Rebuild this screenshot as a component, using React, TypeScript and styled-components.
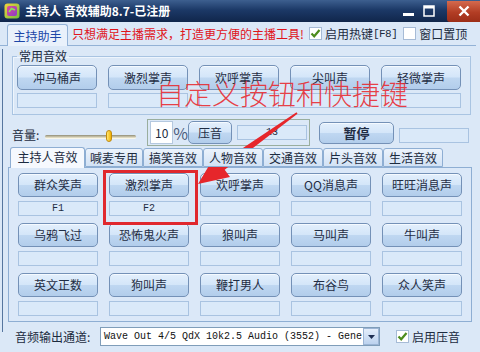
import React from "react";
import styled, { createGlobalStyle } from "styled-components";

const CJK = `"Noto Sans CJK SC", "Noto Sans", sans-serif`;
const MONO = `"Liberation Mono", "DejaVu Sans Mono", monospace`;

const GlobalStyle = createGlobalStyle`
  html, body {
    margin: 0;
    padding: 0;
    background: #dbe8f7;
  }
  body {
    font-family: ${CJK};
    font-size: 12px;
  }
  * {
    box-sizing: border-box;
  }
`;

const Window = styled.div`
  position: relative;
  width: 480px;
  height: 352px;
  overflow: hidden;
  background: #dbe8f7;
  color: #1c2b40;
`;

/* ---------- title bar ---------- */

const TitleBar = styled.div`
  display: flex;
  align-items: center;
  height: 22px;
  background: linear-gradient(#3d5f8f, #1c3967 45%, #10264b);
  color: #fff;
`;

const AppIcon = styled.svg`
  margin: 0 5px 0 4px;
  flex: none;
`;

const Title = styled.div`
  flex: 1;
  font-size: 12px;
  font-weight: bold;
  line-height: 22px;
  white-space: nowrap;
`;

const CaptionButton = styled.div<{ $close?: boolean }>`
  display: flex;
  align-items: center;
  justify-content: center;
  width: ${(p) => (p.$close ? 33 : 20)}px;
  height: 21px;
  margin-left: ${(p) => (p.$close ? 8 : 0)}px;
  background: ${(p) =>
    p.$close ? "linear-gradient(#d46a4e, #b23d24 55%, #9c2e18)" : "transparent"};
  border-radius: ${(p) => (p.$close ? "0 0 0 3px" : "0")};
`;

/* ---------- header row ---------- */

const HeaderRow = styled.div`
  display: flex;
  align-items: flex-end;
  height: 24px;
  padding-left: 7px;
  border-bottom: 1px solid #93b2d6;
  margin-right: 4px;
`;

const HeaderTab = styled.div`
  width: 61px;
  height: 22px;
  border: 1px solid #94b3d8;
  border-bottom: none;
  border-radius: 3px 3px 0 0;
  background: #e9f1fb;
  color: #1b46a8;
  font-size: 12px;
  line-height: 21px;
  text-align: center;
  margin-bottom: -1px;
`;

const Slogan = styled.div`
  align-self: center;
  margin-left: 4px;
  color: #e0141b;
  font-size: 12px;
  white-space: nowrap;
`;

const CheckRow = styled.label<{ $gap: number }>`
  display: flex;
  align-items: center;
  align-self: center;
  margin-left: ${(p) => p.$gap}px;
  font-size: 12px;
  white-space: nowrap;
`;

const Box = styled.span`
  display: flex;
  align-items: center;
  justify-content: center;
  width: 13px;
  height: 13px;
  margin-right: 3px;
  background: #fff;
  border: 1px solid #a6bbd6;
`;

const Mono = styled.span`
  font-family: ${MONO};
  font-size: 11px;
  letter-spacing: -0.5px;
`;

/* ---------- page ---------- */

const Page = styled.div`
  border-left: 1px solid #56769f;
  margin-left: 2px;
  height: 283px;
`;

const Group = styled.fieldset`
  width: 459px;
  margin: 3px 0 0 9px;
  padding: 2px 4px 6px 4px;
  border: 1px solid #a9c4e2;
  box-shadow: inset 1px 1px 0 #eef5fd;
`;

const Legend = styled.legend`
  padding: 0 2px;
  font-size: 12px;
  line-height: 14px;
  color: #1c2b40;
`;

const ButtonGrid = styled.div<{ $rowGap: number }>`
  display: grid;
  grid-template-columns: repeat(5, 80px);
  column-gap: 11px;
  row-gap: ${(p) => p.$rowGap}px;
`;

const Cell = styled.div<{ $gap: number }>`
  display: flex;
  flex-direction: column;
  gap: ${(p) => p.$gap}px;
`;

const SoundButton = styled.div<{ $h: number }>`
  width: 80px;
  height: ${(p) => p.$h}px;
  border: 1px solid #7491b7;
  border-radius: 5px;
  background: linear-gradient(#e3effc 0%, #d4e6f9 48%, #bfd7f1 52%, #b2cdeb 100%);
  box-shadow: inset 0 1px 0 #f5faff;
  font-size: 12px;
  color: #1f2d44;
  line-height: ${(p) => p.$h - 2}px;
  text-align: center;
  white-space: nowrap;
`;

const KeyBox = styled.div`
  width: 80px;
  height: 15px;
  border: 1px solid #a9c3e1;
  background: #dae9f9;
  font-family: ${MONO};
  font-size: 10px;
  line-height: 13px;
  text-align: center;
  color: #1f2d44;
`;

/* ---------- volume row ---------- */

const VolumeRow = styled.div`
  display: flex;
  align-items: flex-start;
  height: 32px;
  padding-left: 9px;
`;

const VolLabel = styled.div`
  width: 33px;
  margin-top: 13px;
  font-size: 12px;
  line-height: 14px;
`;

const Slider = styled.div`
  position: relative;
  display: flex;
  align-items: center;
  width: 91px;
  height: 12px;
  margin-top: 15px;
`;

const Track = styled.div`
  width: 100%;
  height: 3px;
  border-radius: 2px;
  background: linear-gradient(#8f8c76, #efe9cf);
  box-shadow: 0 1px 0 #f8f6ea;
`;

const Thumb = styled.div`
  position: absolute;
  top: 0;
  width: 6px;
  height: 12px;
  border-radius: 3px;
  border: 1px solid #c08a10;
  background: linear-gradient(90deg, #ffe774, #f0b000);
`;

const VolumeBox = styled.div`
  display: flex;
  align-items: center;
  width: 163px;
  height: 27px;
  margin: 4px 0 0 11px;
  padding: 0 2px;
  border: 1px solid #9aae9e;
`;

const NumBox = styled.div`
  width: 23px;
  height: 23px;
  background: #fff;
  border: 1px solid #b4c8df;
  font-size: 12px;
  line-height: 21px;
  padding-left: 4px;
`;

const Percent = styled.div`
  width: 15px;
  font-size: 16px;
  color: #4b5c7c;
  text-align: center;
`;

const SmallButton = styled.div<{ $w: number; $h: number; $bold?: boolean }>`
  width: ${(p) => p.$w}px;
  height: ${(p) => p.$h}px;
  border: 1px solid #7491b7;
  border-radius: 5px;
  background: linear-gradient(#e3effc 0%, #d4e6f9 48%, #bfd7f1 52%, #b2cdeb 100%);
  box-shadow: inset 0 1px 0 #f5faff;
  font-size: ${(p) => (p.$bold ? 13 : 12)}px;
  font-weight: ${(p) => (p.$bold ? "bold" : "normal")};
  line-height: ${(p) => p.$h - 2}px;
  text-align: center;
  color: #1f2d44;
`;

const ValueField = styled.div<{ $ml: number; $mt: number }>`
  width: 70px;
  height: 15px;
  margin: ${(p) => p.$mt}px 0 0 ${(p) => p.$ml}px;
  border: 1px solid #a9c3e1;
  background: #dae9f9;
  font-family: ${MONO};
  font-size: 10px;
  line-height: 13px;
  text-align: center;
`;

const PauseWrap = styled.div`
  margin: 7px 0 0 9px;
`;

/* ---------- tabs ---------- */

const TabBar = styled.div`
  position: relative;
  z-index: 1;
  display: flex;
  align-items: flex-end;
  height: 20px;
  padding-left: 7px;
`;

const Tab = styled.div<{ $w: number; $active?: boolean }>`
  width: ${(p) => p.$w}px;
  height: ${(p) => (p.$active ? 21 : 19)}px;
  margin-bottom: ${(p) => (p.$active ? -1 : 0)}px;
  border: 1px solid #8eaed3;
  border-bottom: ${(p) => (p.$active ? "none" : "1px solid #8eaed3")};
  border-radius: 3px 3px 0 0;
  background: ${(p) => (p.$active ? "#f6f9fe" : "linear-gradient(#ecf3fc, #d2e2f5)")};
  font-size: 12px;
  line-height: 18px;
  text-align: center;
  white-space: nowrap;
`;

const Panel = styled.div`
  width: 464px;
  height: 155px;
  margin-left: 5px;
  padding: 5px 0 0 9px;
  border: 1px solid #8eaed3;
  background: #dbe8f8;
`;

/* ---------- bottom row ---------- */

const BottomRow = styled.div`
  display: flex;
  align-items: center;
  height: 29px;
  padding-left: 12px;
`;

const OutLabel = styled.div`
  width: 85px;
  font-size: 12px;
  white-space: nowrap;
`;

const Select = styled.div`
  display: flex;
  align-items: center;
  width: 280px;
  height: 19px;
  background: #fff;
  border: 1px solid #7f9db9;
`;

const SelectText = styled.div`
  flex: 1;
  padding-left: 3px;
  font-family: ${MONO};
  font-size: 10px;
  white-space: nowrap;
  color: #111;
`;

const DropButton = styled.div`
  display: flex;
  align-items: center;
  justify-content: center;
  width: 16px;
  height: 17px;
  border: 1px solid #9bb4d4;
  background: linear-gradient(#e4eefb, #bcd2ee);
`;

/* ---------- annotation overlay ---------- */

const Caption = styled.div`
  position: absolute;
  left: 156px;
  top: 77px;
  font-size: 28px;
  font-weight: 300;
  line-height: 32px;
  color: rgba(232, 40, 46, 0.88);
  white-space: nowrap;
  pointer-events: none;
`;

const RedFrame = styled.div`
  position: absolute;
  left: 103px;
  top: 170px;
  width: 95px;
  height: 55px;
  border: 3px solid #e0282e;
`;

const ArrowLayer = styled.svg`
  position: absolute;
  left: 0;
  top: 0;
  pointer-events: none;
`;

type Sound = { name: string; key?: string };

const common: Sound[] = [
  { name: "冲马桶声" },
  { name: "激烈掌声" },
  { name: "欢呼掌声" },
  { name: "尖叫声" },
  { name: "轻微掌声" },
];

const hostSounds: Sound[] = [
  { name: "群众笑声", key: "F1" },
  { name: "激烈掌声", key: "F2" },
  { name: "欢呼掌声" },
  { name: "QQ消息声" },
  { name: "旺旺消息声" },
  { name: "乌鸦飞过" },
  { name: "恐怖鬼火声" },
  { name: "狼叫声" },
  { name: "马叫声" },
  { name: "牛叫声" },
  { name: "英文正数" },
  { name: "狗叫声" },
  { name: "鞭打男人" },
  { name: "布谷鸟" },
  { name: "众人笑声" },
];

const tabs = [
  { name: "主持人音效", w: 75 },
  { name: "喊麦专用", w: 58 },
  { name: "搞笑音效", w: 60 },
  { name: "人物音效", w: 60 },
  { name: "交通音效", w: 60 },
  { name: "片头音效", w: 60 },
  { name: "生活音效", w: 60 },
];

const Check: React.FC<{ checked?: boolean }> = ({ checked }) => (
  <Box>
    {checked && (
      <svg width="11" height="11" viewBox="0 0 11 11">
        <path d="M1.5 5.5 L4.2 8.3 L9.5 2" fill="none" stroke="#4c8c1c" strokeWidth="2.2" />
      </svg>
    )}
  </Box>
);

const App: React.FC = () => {
  const volume = 0.72;
  return (
    <Window>
      <GlobalStyle />
      <TitleBar>
        <AppIcon width="16" height="16" viewBox="0 0 16 16">
          <defs>
            <linearGradient id="ib" x1="0" y1="0" x2="1" y2="1">
              <stop offset="0" stopColor="#f3d23c" />
              <stop offset="1" stopColor="#6fbf3f" />
            </linearGradient>
            <linearGradient id="ii" x1="0" y1="0" x2="1" y2="1">
              <stop offset="0" stopColor="#e0489a" />
              <stop offset="1" stopColor="#8a3fc4" />
            </linearGradient>
          </defs>
          <rect x="0.5" y="0.5" width="15" height="15" rx="3" fill="url(#ib)" />
          <rect x="3" y="3" width="10" height="10" rx="2" fill="url(#ii)" />
          <path d="M5 9 L7.5 5.5 L11 7" fill="none" stroke="#8be05a" strokeWidth="1.6" />
        </AppIcon>
        <Title>主持人 音效辅助8.7-已注册</Title>
        <CaptionButton>
          <svg width="12" height="12" viewBox="0 0 12 12">
            <rect x="0" y="8" width="11" height="3" fill="#fff" />
          </svg>
        </CaptionButton>
        <CaptionButton>
          <svg width="12" height="12" viewBox="0 0 12 12">
            <rect x="1" y="1" width="10" height="10" fill="none" stroke="#fff" strokeWidth="1.5" />
            <rect x="1" y="1" width="10" height="2.5" fill="#fff" />
          </svg>
        </CaptionButton>
        <CaptionButton $close>
          <svg width="12" height="12" viewBox="0 0 12 12">
            <path d="M1.5 1.5 L10.5 10.5 M10.5 1.5 L1.5 10.5" stroke="#fff" strokeWidth="2.4" />
          </svg>
        </CaptionButton>
      </TitleBar>

      <HeaderRow>
        <HeaderTab>主持助手</HeaderTab>
        <Slogan>只想满足主播需求，打造更方便的主播工具!</Slogan>
        <CheckRow $gap={5}>
          <Check checked />
          启用热键<Mono>[F8]</Mono>
        </CheckRow>
        <CheckRow $gap={6}>
          <Check />
          窗口置顶
        </CheckRow>
      </HeaderRow>

      <Page>
        <Group>
          <Legend>常用音效</Legend>
          <ButtonGrid $rowGap={0}>
            {common.map((s) => (
              <Cell key={s.name} $gap={3}>
                <SoundButton $h={25}>{s.name}</SoundButton>
                <KeyBox>{s.key}</KeyBox>
              </Cell>
            ))}
          </ButtonGrid>
        </Group>

        <VolumeRow>
          <VolLabel>音量:</VolLabel>
          <Slider>
            <Track />
            <Thumb style={{ left: `${volume * 85}px` }} />
          </Slider>
          <VolumeBox>
            <NumBox>10</NumBox>
            <Percent>%</Percent>
            <SmallButton $w={44} $h={23}>压音</SmallButton>
            <ValueField $ml={5} $mt={0}>13</ValueField>
          </VolumeBox>
          <PauseWrap>
            <SmallButton $w={75} $h={22} $bold>暂停</SmallButton>
          </PauseWrap>
          <ValueField $ml={5} $mt={13} />
        </VolumeRow>

        <TabBar>
          {tabs.map((t, i) => (
            <Tab key={t.name} $w={t.w} $active={i === 0}>
              {t.name}
            </Tab>
          ))}
        </TabBar>
        <Panel>
          <ButtonGrid $rowGap={7}>
            {hostSounds.map((s) => (
              <Cell key={s.name + (s.key ?? "")} $gap={4}>
                <SoundButton $h={24}>{s.name}</SoundButton>
                <KeyBox>{s.key}</KeyBox>
              </Cell>
            ))}
          </ButtonGrid>
        </Panel>

        <BottomRow>
          <OutLabel>音频输出通道:</OutLabel>
          <Select>
            <SelectText>Wave Out 4/5 QdX 10k2.5 Audio (3552) - Gene</SelectText>
            <DropButton>
              <svg width="7" height="4" viewBox="0 0 7 4">
                <path d="M0 0 H7 L3.5 4 Z" fill="#1e2f52" />
              </svg>
            </DropButton>
          </Select>
          <CheckRow $gap={16}>
            <Check checked />
            启用压音
          </CheckRow>
        </BottomRow>
      </Page>

      <Caption>自定义按钮和快捷键</Caption>
      <RedFrame />
      <ArrowLayer width="480" height="352" viewBox="0 0 480 352">
        <polygon
          points="297.5,113.7 224.7,169.8 230,177.1 198,184 214.8,155.9 220.1,163.2 296.5,112.3"
          fill="#e6262b"
        />
      </ArrowLayer>
    </Window>
  );
};

export default App;
